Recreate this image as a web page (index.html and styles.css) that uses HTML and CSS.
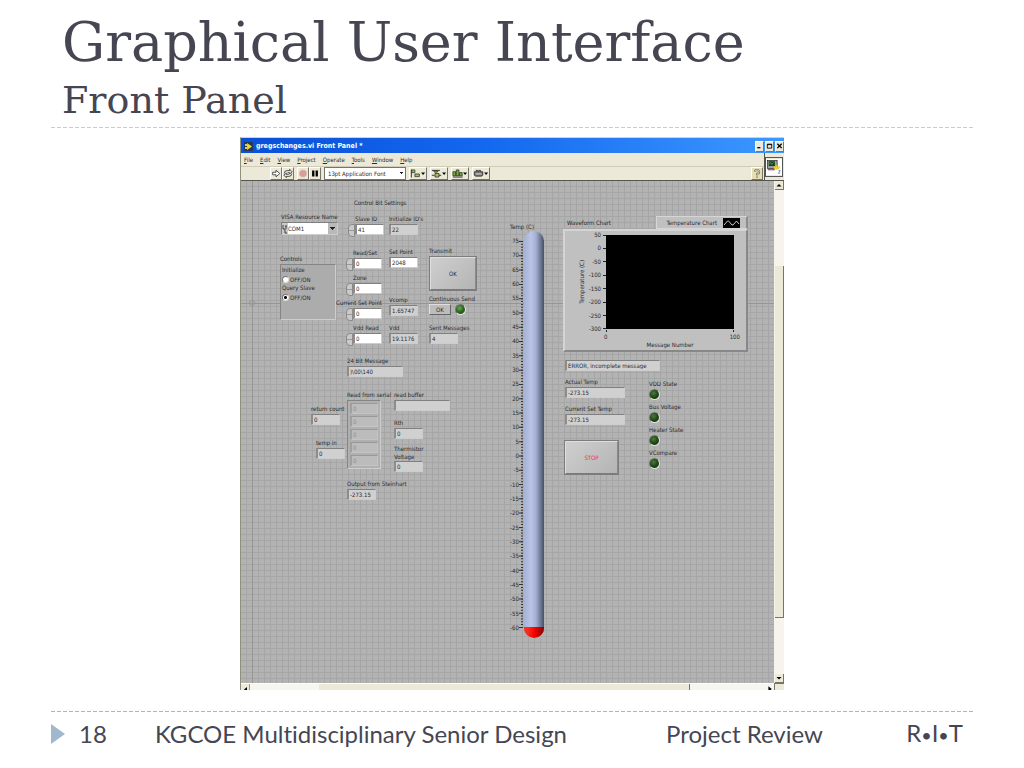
FILE: index.html
```html
<!DOCTYPE html>
<html lang="en">

<head>
    <meta charset="UTF-8">
    <meta name="viewport" content="width=device-width, initial-scale=1.0">
    <title>Graphical User Interface</title>
    <link rel="stylesheet" href="styles.css">
</head>

<body>
    <header class="slide-header">
        <h1>Graphical User Interface</h1>
        <h2>Front Panel</h2>
    </header>

    <main class="window">
        <div class="title-bar">
            <svg class="app-icon" viewBox="0 0 9 9">
                <rect width="9" height="9" fill="#223a5e" />
                <path d="M3 1v7l5-3.500z" fill="#f2d43a" />
                <path d="M1 2h3v2H1zM1 5h3v2H1z" fill="#d8c860" />
            </svg>
            <span class="title-text">gregschanges.vi Front Panel *</span>
            <button type="button" class="win-button" aria-label="Minimize"><svg viewBox="0 0 8 9"><path d="M1.500 6.500h3.500" stroke="#000" stroke-width="1.500" /></svg></button>
            <button type="button" class="win-button" aria-label="Maximize"><svg viewBox="0 0 8 9"><path d="M1.500 2.500h5v4.500h-5zM1.500 3h5" fill="none" stroke="#000" /></svg></button>
            <button type="button" class="win-button" aria-label="Close"><svg viewBox="0 0 8 9"><path d="M1.500 2l5 5M6.500 2l-5 5" stroke="#000" stroke-width="1.500" /></svg></button>
        </div>

        <div class="bars">
            <div class="bars-left">
                <nav class="menu-bar">
                    <button type="button"><u>F</u>ile</button>
                    <button type="button"><u>E</u>dit</button>
                    <button type="button"><u>V</u>iew</button>
                    <button type="button"><u>P</u>roject</button>
                    <button type="button"><u>O</u>perate</button>
                    <button type="button"><u>T</u>ools</button>
                    <button type="button"><u>W</u>indow</button>
                    <button type="button"><u>H</u>elp</button>
                </nav>
                <div class="tool-bar">
                    <div class="tool-group">
                        <button type="button" class="tool" aria-label="Run"><svg viewBox="0 0 12 12"><path d="M2 4.500h4V2l4.500 4L6 10V7.500H2z" fill="#fff" stroke="#222" stroke-width=".9" /></svg></button>
                        <button type="button" class="tool" aria-label="Run continuously"><svg viewBox="0 0 12 12"><path d="M1.500 6a3.500 3.500 0 0 1 3.500-3.500h3V1L11 4 8 6.500V5H5.500M10.500 6A3.500 3.500 0 0 1 7 9.500H4V11L1 8l3-2.500V7h3" fill="none" stroke="#222" stroke-width=".9" /></svg></button>
                    </div>
                    <div class="tool-group">
                        <button type="button" class="tool" aria-label="Abort"><svg viewBox="0 0 12 12"><path d="M4 2h4l2 2v4l-2 2H4L2 8V4z" fill="#dc9c98" stroke="#c9a9a2" stroke-width=".6" /></svg></button>
                        <button type="button" class="tool" aria-label="Pause"><svg viewBox="0 0 12 12"><path d="M2.500 2.500h2.800v7H2.500zM6.700 2.500h2.800v7H6.700z" fill="#000" /></svg></button>
                    </div>
                    <select class="font-select" aria-label="Font">
                        <option>13pt Application Font</option>
                    </select>
                    <button type="button" class="tool wide" aria-label="Align"><svg viewBox="0 0 18 12"><path d="M1.500 1.500v9" stroke="#222" /><path d="M2 2h3.500v3H2zM5.500 6.500h5v3h-5z" fill="#9cc45c" stroke="#222" stroke-width=".8" /><path d="M12.500 5h4.500l-2.200 2.700z" /></svg></button>
                    <button type="button" class="tool wide" aria-label="Distribute"><svg viewBox="0 0 18 12"><path d="M1 2.500h9M1 8h3M9 8h2.500" stroke="#222" /><path d="M3 3h5l-1 1.500H4zM4.500 6h4.500v4h-4.500z" fill="#9cc45c" stroke="#222" stroke-width=".8" /><path d="M12.500 5h4.500l-2.200 2.700z" /></svg></button>
                    <button type="button" class="tool wide" aria-label="Resize"><svg viewBox="0 0 18 12"><path d="M1 4h3v4.500H1zM4.800 2h3v6.500h-3zM8.500 5h3v3.500h-3z" fill="#78b338" stroke="#222" stroke-width=".8" /><path d="M1 10h11" stroke="#222" /><path d="M12.500 5h4.500l-2.200 2.700z" /></svg></button>
                    <button type="button" class="tool wide" aria-label="Reorder"><svg viewBox="0 0 18 12"><path d="M1.500 4h2V2.500h2V4h1V2.500h2V4H11v4L9.500 9H3L1.500 8z" fill="#777" stroke="#222" stroke-width=".8" /><path d="M3 6.500h6.500" stroke="#eee" /><path d="M12.500 5h4.500l-2.200 2.700z" /></svg></button>
                    <button type="button" class="tool help" aria-label="Context help"><svg viewBox="0 0 12 12"><path d="M3.500 4a2.500 2.300 0 1 1 3.500 2.200L6 7v1.500M6 9.500V11" fill="none" stroke="#555" stroke-width="2.400" /><path d="M3.500 4a2.500 2.300 0 1 1 3.500 2.200L6 7v1.500M6 9.500V11" fill="none" stroke="#fffbd0" stroke-width="1.200" /></svg></button>
                </div>
            </div>
            <div class="vi-icon">
                <svg viewBox="0 0 18 18">
                    <rect width="18" height="18" fill="#fff" />
                    <rect x="1.500" y="1.500" width="11" height="9" fill="#a5a8a5" stroke="#222" stroke-width=".8" />
                    <rect x="3" y="2.500" width="7" height="5.500" fill="#134521" />
                    <path d="M3.500 6L5 4l1.500 2 2-2" fill="none" stroke="#57d061" stroke-width=".7" />
                    <path d="M2 12h8" stroke="#b94c9f" stroke-width="1.500" />
                    <path d="M9 8l2 1 1-3 1 3 3-1-1 3-3 1-3-1z" fill="#f3ce2e" />
                    <path d="M14 13h2l-2 3h2" fill="none" stroke="#4b6ea8" stroke-width=".8" />
                </svg>
            </div>
        </div>

        <div class="work-area">
            <!-- front panel: controls sit wherever they were dropped -->
            <form class="panel">
                <svg class="origin" viewBox="0 0 8 8"><circle cx="4" cy="4" r="2.500" fill="none" stroke="#959595" /></svg>

                <span class="item heading">Control Bit Settings</span>

                <div class="item visa">
                    <label for="visa">VISA Resource Name</label>
                    <div class="visa-box">
                        <svg viewBox="0 0 6 10"><path d="M1 1v4h2v4M3 2h2M4 2v3M3 9h2" fill="none" stroke="#333" stroke-width=".9" /></svg>
                        <select id="visa"><option>COM1</option></select>
                    </div>
                </div>

                <div class="item spin slave-id">
                    <label for="slave">Slave ID</label>
                    <div class="spin-box"><i class="knob"></i><input id="slave" value="41"></div>
                </div>
                <div class="item spin-column">
                    <div class="spin">
                        <label for="readset">Read/Set</label>
                        <div class="spin-box"><i class="knob"></i><input id="readset" value="0"></div>
                    </div>
                    <div class="spin">
                        <label for="zone">Zone</label>
                        <div class="spin-box"><i class="knob"></i><input id="zone" value="0"></div>
                    </div>
                    <div class="spin">
                        <label for="csp" class="long">Current Set Point</label>
                        <div class="spin-box"><i class="knob"></i><input id="csp" value="0"></div>
                    </div>
                    <div class="spin">
                        <label for="vddread">Vdd Read</label>
                        <div class="spin-box"><i class="knob"></i><input id="vddread" value="0"></div>
                    </div>
                </div>

                <div class="item init-ids">
                    <label for="initids">Initialize ID's</label>
                    <input id="initids" class="readout" value="22" readonly>
                </div>
                <div class="item set-point">
                    <label for="setpoint">Set Point</label>
                    <input id="setpoint" value="2048">
                </div>
                <div class="item vcomp">
                    <label for="vcomp">Vcomp</label>
                    <input id="vcomp" class="readout" value="1.65747" readonly>
                </div>
                <div class="item vdd">
                    <label for="vdd">Vdd</label>
                    <input id="vdd" class="readout" value="19.1176" readonly>
                </div>

                <div class="item transmit">
                    <label for="transmit">Transmit</label>
                    <button type="button" id="transmit" class="big-button">OK</button>
                </div>
                <div class="item continuous">
                    <label for="send">Continuous Send</label>
                    <div class="send-row">
                        <button type="button" id="send" class="small-button">OK</button>
                        <i class="led on"></i>
                    </div>
                </div>
                <div class="item sent">
                    <label for="sent">Sent Messages</label>
                    <input id="sent" class="readout" value="4" readonly>
                </div>

                <div class="item controls">
                    <span class="caption">Controls</span>
                    <div class="controls-box">
                        <span class="caption">Initialize</span>
                        <label><input type="radio" name="mode">OFF/ON</label>
                        <span class="caption">Query Slave</span>
                        <label><input type="radio" name="mode" checked>OFF/ON</label>
                    </div>
                </div>

                <div class="item message">
                    <label for="message">24 Bit Message</label>
                    <input id="message" class="readout" value=")\00\140" readonly>
                </div>
                <div class="item serial">
                    <span class="caption">Read from serial</span>
                    <div class="serial-box">
                        <input class="dim" aria-label="Byte 0" value="0" readonly>
                        <input class="dim" aria-label="Byte 1" value="0" readonly>
                        <input class="dim" aria-label="Byte 2" value="0" readonly>
                        <input class="dim" aria-label="Byte 3" value="0" readonly>
                        <input class="dim" aria-label="Byte 4" value="0" readonly>
                    </div>
                </div>
                <div class="item buffer">
                    <label for="buffer">read buffer</label>
                    <input id="buffer" class="readout" value="" readonly>
                </div>
                <div class="item return-count">
                    <label for="count">return count</label>
                    <input id="count" class="readout" value="0" readonly>
                </div>
                <div class="item temp-in">
                    <label for="tempin">temp in</label>
                    <input id="tempin" class="readout" value="0" readonly>
                </div>
                <div class="item rth">
                    <label for="rth">Rth</label>
                    <input id="rth" class="readout" value="0" readonly>
                </div>
                <div class="item thermistor">
                    <label for="thermistor">Thermistor<br>Voltage</label>
                    <input id="thermistor" class="readout" value="0" readonly>
                </div>
                <div class="item steinhart">
                    <label for="steinhart">Output from Steinhart</label>
                    <input id="steinhart" class="readout" value="-273.15" readonly>
                </div>

                <div class="item thermometer">
                    <span class="caption">Temp (C)</span>
                    <div class="thermo-body">
                        <div class="thermo-scale">
                            <span>75</span><span>70</span><span>65</span><span>60</span><span>55</span><span>50</span><span>45</span>
                            <span>40</span><span>35</span><span>30</span><span>25</span><span>20</span><span>15</span><span>10</span>
                            <span>5</span><span>0</span><span>-5</span><span>-10</span><span>-15</span><span>-20</span><span>-25</span>
                            <span>-30</span><span>-35</span><span>-40</span><span>-45</span><span>-50</span><span>-55</span><span>-60</span>
                        </div>
                        <svg class="thermo-ticks" viewBox="0 0 4 387">
                            <path d="M3 0V387" pathLength="3870" stroke="#333" stroke-width="2" stroke-dasharray="10 18.590" />
                            <path d="M2 0V387" pathLength="3870" stroke="#333" stroke-width="4" stroke-dasharray="10 132.960" />
                        </svg>
                        <div class="tube"><div class="mercury"></div></div>
                    </div>
                </div>

                <div class="item chart">
                    <div class="chart-top">
                        <span class="caption">Waveform Chart</span>
                        <div class="legend">
                            <span>Temperature Chart</span>
                            <svg viewBox="0 0 17 10"><rect width="17" height="10" /><path d="M1 7l3.500-4h1L9 7h1l3.500-4L16 6" fill="none" stroke="#ddd" stroke-width=".9" /></svg>
                        </div>
                    </div>
                    <div class="chart-body">
                        <span class="y-title">Temperature (C)</span>
                        <div class="y-axis">
                            <span>50</span><span>0</span><span>-50</span><span>-100</span><span>-150</span><span>-200</span><span>-250</span><span>-300</span>
                        </div>
                        <div class="plot"></div>
                        <div class="x-axis"><span>0</span><span>100</span></div>
                        <span class="x-title">Message Number</span>
                    </div>
                </div>

                <div class="item error">
                    <input class="readout" aria-label="Status" value="ERROR, incomplete message" readonly>
                </div>
                <div class="item temps">
                    <div>
                        <label for="actual">Actual Temp</label>
                        <input id="actual" class="readout" value="-273.15" readonly>
                    </div>
                    <div>
                        <label for="current">Current Set Temp</label>
                        <input id="current" class="readout" value="-273.15" readonly>
                    </div>
                </div>
                <div class="item stop">
                    <button type="button" class="big-button stop-button">STOP</button>
                </div>
                <div class="item states">
                    <div class="state"><span class="caption">VDD State</span><i class="led"></i></div>
                    <div class="state"><span class="caption">Bus Voltage</span><i class="led"></i></div>
                    <div class="state"><span class="caption">Heater State</span><i class="led"></i></div>
                    <div class="state"><span class="caption">VCompare</span><i class="led"></i></div>
                </div>
            </form>

            <div class="v-scroll">
                <button type="button" class="arrow" aria-label="Scroll up"><svg viewBox="0 0 8 8"><path d="M1.500 5.500h5L4 3z" /></svg></button>
                <div class="v-thumb"></div>
                <button type="button" class="arrow" aria-label="Scroll down"><svg viewBox="0 0 8 8"><path d="M1.500 3h5L4 5.500z" /></svg></button>
            </div>
            <div class="h-scroll">
                <button type="button" class="arrow" aria-label="Scroll left"><svg viewBox="0 0 8 8"><path d="M6 2v5L3 4.500z" /></svg></button>
                <div class="h-thumb"></div>
                <button type="button" class="arrow flat" aria-label="Scroll right"><svg viewBox="0 0 8 8"><path d="M3 2v5l3-2.500z" /></svg></button>
            </div>
            <div class="corner"></div>
        </div>
    </main>

    <footer class="slide-footer">
        <svg class="marker" viewBox="0 0 14 20"><path d="M0 0l14 10L0 20z" fill="#9fb8cd" /></svg>
        <span class="number">18</span>
        <span class="course">KGCOE Multidisciplinary Senior Design</span>
        <span class="review">Project Review</span>
        <span class="school">R<small>•</small>I<small>•</small>T</span>
    </footer>
</body>

</html>
```
FILE: styles.css
```css
* {
    box-sizing: border-box;
}

body {
    margin: 0;
    padding: 11px 51px 0;
    background-color: #fff;
    color: #464653;
    font-family: Lato, sans-serif;
}

svg {
    display: block;
}

/* slide header */
.slide-header {
    height: 117px;
    padding-left: 11px;
    background: repeating-linear-gradient(90deg, #c8ccda 0 4px, transparent 4px 6px) bottom / 100% 1px no-repeat;
}

h1,
h2 {
    margin: 0;
    font-family: "DejaVu Serif", serif;
    font-weight: normal;
    white-space: nowrap;
}

h1 {
    font-size: 54px;
    line-height: 64px;
}

h2 {
    padding-top: 1px;
    font-size: 38px;
    line-height: 48px;
}

/* application window */
.window {
    max-width: 544px;
    margin: 9px auto 0;
    border-top: 1px solid #c9d3e4;
    border-left: 1px solid #8e927c;
    color: #2a2a2a;
    font-family: "DejaVu Sans Condensed", "DejaVu Sans", sans-serif;
    font-size: 6px;
    line-height: 8px;
}

.window button,
.window input,
.window select {
    margin: 0;
    padding: 0;
    border: 0;
    border-radius: 0;
    color: inherit;
    font: inherit;
}

.window .title-bar {
    display: flex;
    align-items: center;
    gap: 1px;
    height: 15px;
    padding: 1px 0 0 3px;
    background: linear-gradient(90deg, #0a50d8, #1468ee 45%, #3d98ff);
    color: #fff;
    font-weight: bold;
}

.app-icon {
    width: 9px;
    height: 9px;
}

.title-text {
    flex: 1;
    padding-left: 2px;
    font-size: 7px;
}

.window .win-button {
    width: 9px;
    height: 11px;
    border: 1px solid #fff;
    border-right-color: #777;
    border-bottom-color: #777;
    background-color: #ece9d8;
}

.bars {
    display: flex;
    height: 28px;
    border-bottom: 1px solid #55554d;
    background-color: #ece9d8;
}

.bars-left {
    flex: 1;
}

.menu-bar {
    display: flex;
    gap: 7px;
    height: 14px;
    padding: 2px 3px;
    border-bottom: 1px solid #cfccba;
}

.menu-bar button {
    background: none;
}

.tool-bar {
    display: flex;
    gap: 3px;
    height: 13px;
    padding-left: 29px;
}

.tool-group {
    display: flex;
}

.window .tool {
    width: 12px;
    height: 13px;
    border: 1px solid #fff;
    border-right-color: #77756a;
    border-bottom-color: #77756a;
    background-color: #ece9d8;
}

.tool svg {
    width: 100%;
    height: 11px;
}

.window .tool.wide {
    width: 18px;
}

.window .tool.help {
    margin-left: auto;
    margin-right: 1px;
    background-color: #e4dfb4;
}

.window .font-select {
    width: 82px;
    height: 13px;
    padding-left: 3px;
    border: 1px solid #77756a;
    background: linear-gradient(#222, #222) 75px 4px / 3px 1px no-repeat, linear-gradient(#222, #222) 76px 5px / 1px 1px no-repeat, #fff;
    appearance: none;
}

.vi-icon {
    width: 20px;
    padding: 4px 1px 0 0;
    border-left: 1px solid #55554d;
}

.vi-icon svg {
    width: 18px;
    height: 20px;
    border: 1px solid #555;
}

.work-area {
    display: grid;
    grid-template-columns: 1fr 10px;
    grid-template-rows: 502px 7px;
}

/* grid canvas */
.panel {
    position: relative;
    overflow: hidden;
    background:
        linear-gradient(#969696, #969696) 0 122px / 100% 1px no-repeat,
        linear-gradient(#969696, #969696) 11px 0 / 1px 100% no-repeat,
        repeating-linear-gradient(90deg, transparent 0 5px, #a6a6a6 5px 6px),
        repeating-linear-gradient(#b3b3b3 0 5px, #a6a6a6 5px 6px);
}

.origin {
    position: absolute;
    left: 7px;
    top: 118px;
    width: 8px;
    height: 8px;
}

.item {
    position: absolute;
    white-space: nowrap;
}

.item label,
.caption {
    display: block;
    height: 9px;
}

.panel input {
    display: block;
    width: 29px;
    height: 11px;
    padding-left: 1px;
    border: 1px solid #cdcdcd;
    border-top-color: #808080;
    border-left: 2px solid #8c8c8c;
    background-color: #fff;
}

.panel .readout {
    background-color: #d0d0d0;
}

.heading {
    left: 113px;
    top: 18px;
}

.visa {
    left: 40px;
    top: 32px;
}

.visa-box {
    display: flex;
    align-items: center;
    width: 57px;
    height: 13px;
    border: 1px solid #808080;
    border-right-color: #cdcdcd;
    border-bottom-color: #cdcdcd;
    background-color: #c8c8c8;
}

.visa-box svg {
    width: 6px;
    height: 10px;
}

.visa-box select {
    flex: 1;
    height: 11px;
    background: linear-gradient(#222, #222) 42px 4px / 5px 1px no-repeat, linear-gradient(#222, #222) 43px 5px / 3px 1px no-repeat, linear-gradient(#222, #222) 44px 6px / 1px 1px no-repeat, linear-gradient(90deg, #fff 40px, #b9b9b9 40px);
    appearance: none;
}

.spin {
    display: flex;
    flex-direction: column;
    align-items: flex-end;
}

.spin label {
    width: 29px;
}

.spin label.long {
    width: auto;
}

.spin-box {
    display: flex;
}

.knob {
    width: 7px;
    height: 13px;
    border: 1px solid #8a8a8a;
    border-radius: 4px 0 0 4px;
    background: linear-gradient(#999, #999) 0 5px / 5px 1px no-repeat, #cacaca;
}

.slave-id {
    left: 107px;
    top: 34px;
}

.spin-column {
    display: flex;
    flex-direction: column;
    gap: 3px;
    left: 95px;
    top: 68px;
}

.init-ids {
    left: 148px;
    top: 34px;
}

.set-point {
    left: 148px;
    top: 67px;
}

.vcomp {
    left: 148px;
    top: 115px;
}

.vdd {
    left: 148px;
    top: 143px;
}

.transmit {
    left: 188px;
    top: 66px;
}

.window .big-button {
    display: block;
    width: 48px;
    height: 35px;
    border: 2px solid #dedede;
    border-right-color: #8a8a8a;
    border-bottom-color: #7a7a7a;
    outline: 1px solid #7d7d7d;
    outline-offset: -1px;
    background: linear-gradient(135deg, #cfcfcf, #b4b4b4);
}

.continuous {
    left: 188px;
    top: 114px;
}

.send-row {
    display: flex;
    gap: 4px;
}

.window .small-button {
    width: 22px;
    height: 11px;
    border: 1px solid #dedede;
    border-right-color: #666;
    border-bottom-color: #666;
    background-color: #bdbdbd;
}

.led {
    display: block;
    width: 11px;
    height: 11px;
    border: 1px solid #6d7a6a;
    border-right-color: #e2e2e2;
    border-bottom-color: #e2e2e2;
    border-radius: 50%;
    background: radial-gradient(circle at 40% 35%, #4f7a42, #1f4714 50%, #12300a);
}

.led.on {
    background: radial-gradient(circle at 40% 35%, #6fa55c, #2b641c 50%, #1a4510);
}

.sent {
    left: 188px;
    top: 143px;
}

.controls {
    left: 39px;
    top: 74px;
}

.controls-box {
    width: 56px;
    height: 56px;
    padding: 1px;
    border: 1px solid #858585;
    border-right-color: #cdcdcd;
    border-bottom-color: #cdcdcd;
    background-color: #acacac;
}

.controls-box label {
    display: flex;
    align-items: center;
    gap: 1px;
}

.panel input[type="radio"] {
    width: 7px;
    height: 7px;
    padding: 0;
    border: 1px solid #777;
    border-right-color: #ddd;
    border-bottom-color: #ddd;
    border-radius: 50%;
    appearance: none;
}

.panel input[type="radio"]:checked {
    background: radial-gradient(circle, #000 0 1px, #fff 2px);
}

.message {
    left: 106px;
    top: 176px;
}

.panel .message input,
.panel .buffer input {
    width: 56px;
}

.serial {
    left: 106px;
    top: 210px;
}

.serial-box {
    display: flex;
    flex-direction: column;
    gap: 2px;
    width: 34px;
    padding: 2px;
    border: 1px solid #858585;
    border-right-color: #cdcdcd;
    border-bottom-color: #cdcdcd;
    background-color: #b0b0b0;
}

.panel .dim {
    width: 28px;
    border-color: #999 #c4c4c4 #c4c4c4 #a0a0a0;
    background-color: #bcbcbc;
    color: #8c8c8c;
}

.buffer {
    left: 153px;
    top: 210px;
}

.return-count {
    left: 70px;
    top: 224px;
}

.temp-in {
    left: 75px;
    top: 258px;
}

.rth {
    left: 153px;
    top: 238px;
}

.thermistor {
    left: 153px;
    top: 264px;
}

.thermistor label {
    height: 16px;
}

.steinhart {
    left: 106px;
    top: 299px;
}

/* thermometer */
.thermometer {
    left: 269px;
    top: 42px;
}

.thermo-body {
    display: flex;
    height: 406px;
}

.thermo-scale {
    display: flex;
    flex-direction: column;
    justify-content: space-between;
    width: 9px;
    height: 395px;
    margin: 5px 0 0;
    text-align: right;
}

.thermo-scale span {
    align-self: flex-end;
}

.thermo-ticks {
    width: 4px;
    height: 387px;
    margin: 9px 1px 0 0;
}

.tube {
    display: flex;
    align-items: flex-end;
    width: 20px;
    margin-top: -1px;
    overflow: hidden;
    border-radius: 10px;
    background: linear-gradient(90deg, #a5b2d6, #bac5e6 35%, #a3afd2 60%, #4b546c 98%);
}

.mercury {
    width: 100%;
    height: 11px;
    background: linear-gradient(100deg, #ff2a1a 20%, #ee0000 55%, #700);
}

/* waveform chart */
.chart {
    left: 322px;
    top: 35px;
    width: 185px;
}

.chart-top {
    display: flex;
    align-items: flex-end;
    justify-content: space-between;
    padding-left: 4px;
}

.chart-top .caption {
    height: 10px;
}

.legend {
    display: flex;
    align-items: center;
    justify-content: flex-end;
    gap: 6px;
    width: 92px;
    height: 13px;
    padding-right: 6px;
    border: 1px solid #d6d6d6;
    border-right: 2px solid #8c8c8c;
    background-color: #c0c0c0;
}

.legend svg {
    width: 17px;
    height: 10px;
}

.chart-body {
    display: grid;
    grid-template-columns: 16px 20px 128px;
    grid-template-rows: 94px 12px 8px;
    height: 123px;
    padding: 4px 0 0 5px;
    border: 2px solid #d4d4d4;
    border-right: 2px solid #888;
    border-bottom: 2px solid #888;
    background-color: #c0c0c0;
}

.y-title {
    align-self: center;
    justify-self: end;
    writing-mode: vertical-rl;
    transform: rotate(180deg);
}

.y-axis {
    display: flex;
    flex-direction: column;
    justify-content: space-between;
    margin: -4px 0;
}

.y-axis span {
    padding-right: 5px;
    background: linear-gradient(#222, #222) right center / 3px 1px no-repeat;
    text-align: right;
}

.plot {
    background-color: #000;
}

.x-axis {
    display: flex;
    grid-column: 3;
    justify-content: space-between;
    margin: 0 -6px 0 -2px;
    padding-top: 4px;
    background: linear-gradient(#222, #222) 2px 1px / 1px 2px no-repeat, linear-gradient(#222, #222) 129px 1px / 1px 2px no-repeat;
}

.x-title {
    grid-column: 3;
    text-align: center;
}

.error {
    left: 324px;
    top: 179px;
}

.panel .error input {
    width: 95px;
}

.temps {
    display: flex;
    flex-direction: column;
    gap: 7px;
    left: 324px;
    top: 197px;
}

.panel .temps input {
    width: 60px;
}

.stop {
    left: 323px;
    top: 259px;
}

.window .stop-button {
    width: 55px;
    color: #f03030;
}

.states {
    display: flex;
    flex-direction: column;
    gap: 3px;
    left: 408px;
    top: 199px;
}

/* scroll bars */
.v-scroll {
    display: flex;
    flex-direction: column;
    border-left: 1px solid #f6f4ec;
    background-color: #f6f4ec;
}

.arrow {
    flex: none;
    width: 9px;
    height: 9px;
    background-color: #ece9d8;
}

.window .v-scroll .arrow {
    border-right: 1px solid #77756a;
    border-bottom: 1px solid #77756a;
}

.v-thumb {
    flex: none;
    height: 352px;
    margin: 76px 0 auto;
    border-right: 1px solid #77756a;
    border-bottom: 1px solid #77756a;
    background-color: #ece9d8;
}

.h-scroll {
    display: flex;
    overflow: hidden;
    border-top: 1px solid #fff;
    background-color: #f6f5ef;
}

.window .h-scroll .arrow {
    border-right: 1px solid #9d9b8c;
}

.window .h-scroll .arrow.flat {
    border-right: 0;
    background: none;
}

.h-thumb {
    flex: none;
    width: 371px;
    margin: 0 auto 0 69px;
    border-right: 1px solid #77756a;
    background-color: #ece9d8;
}

.corner {
    border-top: 1px solid #77756a;
    border-left: 1px solid #77756a;
    background-color: #ece9d8;
}

/* slide footer */
.slide-footer {
    display: flex;
    align-items: center;
    margin-top: 21px;
    padding: 7px 10px 0 0;
    background: repeating-linear-gradient(90deg, #9fb8cd 0 4px, transparent 4px 6px) top / 100% 1px no-repeat;
    font-size: 24px;
    font-variant-ligatures: none;
    line-height: 30px;
    white-space: nowrap;
}

.marker {
    width: 14px;
    height: 20px;
}

.number {
    width: 90px;
    padding-left: 14px;
}

.course {
    width: 511px;
}

.school {
    margin-left: auto;
}

.school small {
    font-size: 18px;
}
```
